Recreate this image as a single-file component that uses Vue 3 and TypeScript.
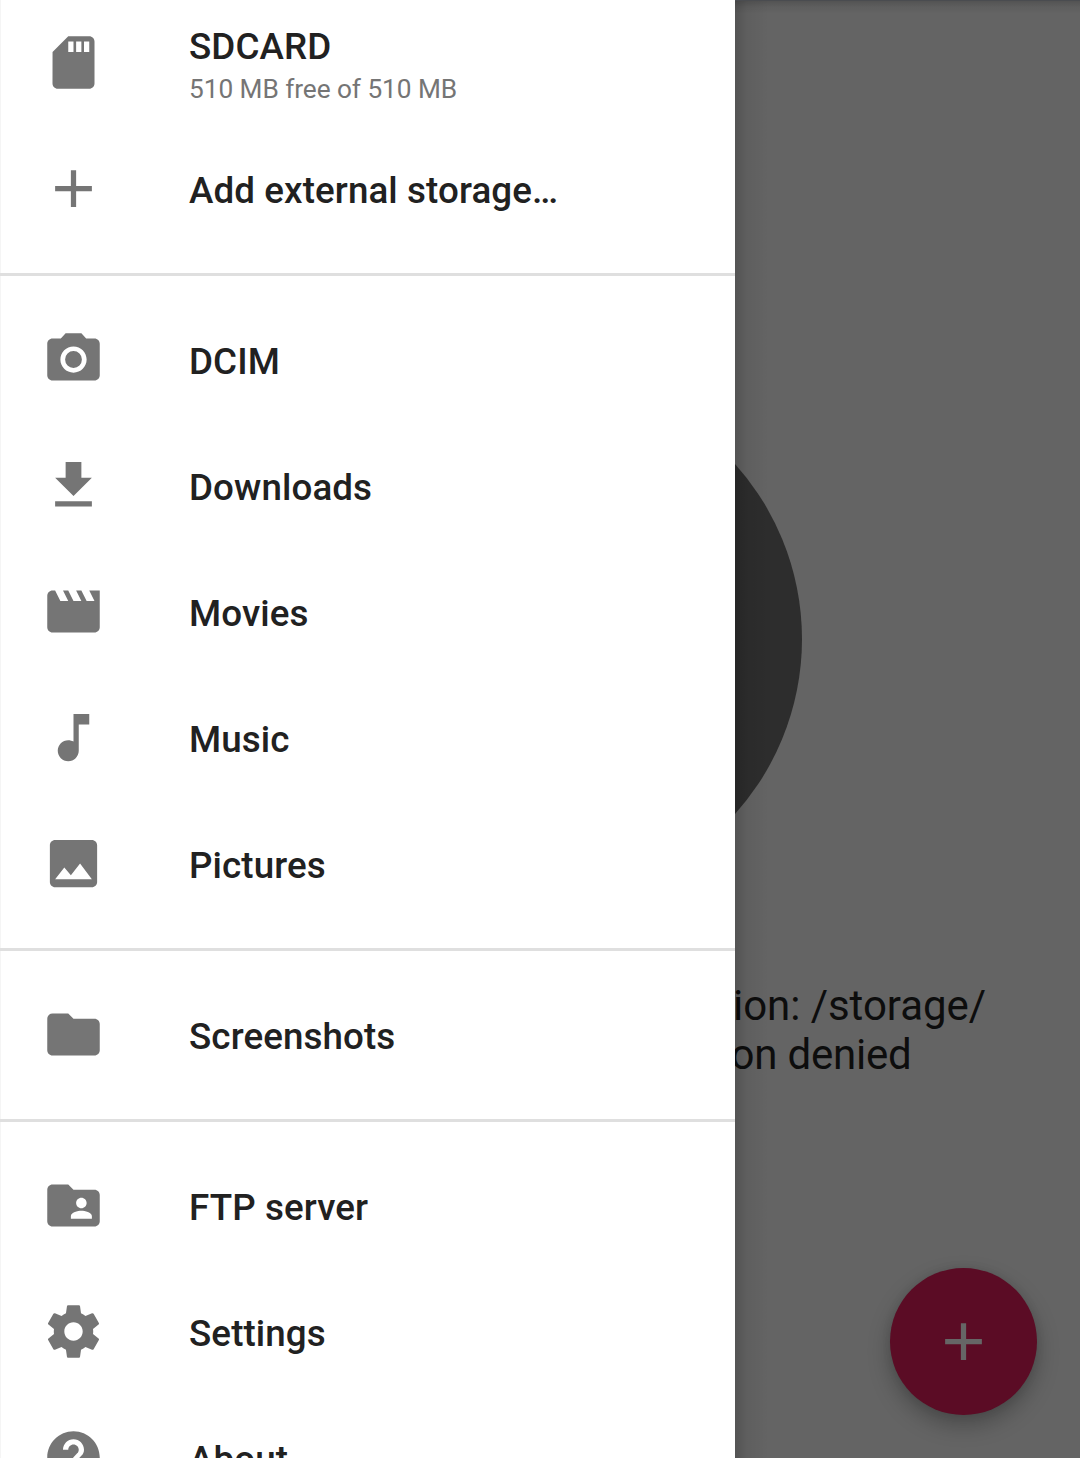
<script setup lang="ts">
interface NavItem {
  label: string
  icon: string
  detail?: string
}

const sections: NavItem[][] = [
  [
    {
      label: 'SDCARD',
      detail: '510 MB free of 510 MB',
      icon: 'M18 2h-8L4.02 8 4 20c0 1.1.9 2 2 2h12c1.1 0 2-.9 2-2V4c0-1.1-.9-2-2-2zm-6 6h-2V4h2v4zm3 0h-2V4h2v4zm3 0h-2V4h2v4z',
    },
    { label: 'Add external storage…', icon: 'M19 13h-6v6h-2v-6H5v-2h6V5h2v6h6v2z' },
  ],
  [
    {
      label: 'DCIM',
      icon: 'M12 8.8a3.2 3.2 0 1 0 0 6.4 3.2 3.2 0 1 0 0-6.4zM9 2L7.17 4H4c-1.1 0-2 .9-2 2v12c0 1.1.9 2 2 2h16c1.1 0 2-.9 2-2V6c0-1.1-.9-2-2-2h-3.17L15 2H9zm3 15c-2.76 0-5-2.24-5-5s2.24-5 5-5 5 2.24 5 5-2.24 5-5 5z',
    },
    { label: 'Downloads', icon: 'M19 9h-4V3H9v6H5l7 7 7-7zM5 18v2h14v-2H5z' },
    {
      label: 'Movies',
      icon: 'M18 4l2 4h-3l-2-4h-2l2 4h-3l-2-4H8l2 4H7L5 4H4c-1.1 0-1.99.9-1.99 2L2 18c0 1.1.9 2 2 2h16c1.1 0 2-.9 2-2V4h-4z',
    },
    {
      label: 'Music',
      icon: 'M12 3v10.55c-.59-.34-1.27-.55-2-.55-2.21 0-4 1.79-4 4s1.79 4 4 4 4-1.79 4-4V7h4V3h-6z',
    },
    {
      label: 'Pictures',
      icon: 'M21 19V5c0-1.1-.9-2-2-2H5c-1.1 0-2 .9-2 2v14c0 1.1.9 2 2 2h14c1.1 0 2-.9 2-2zM8.5 13.5l2.5 3.01L14.5 12l4.5 6H5l3.5-4.5z',
    },
  ],
  [
    {
      label: 'Screenshots',
      icon: 'M10 4H4c-1.1 0-1.99.9-1.99 2L2 18c0 1.1.9 2 2 2h16c1.1 0 2-.9 2-2V8c0-1.1-.9-2-2-2h-8l-2-2z',
    },
  ],
  [
    {
      label: 'FTP server',
      icon: 'M20 6h-8l-2-2H4c-1.1 0-1.99.9-1.99 2L2 18c0 1.1.9 2 2 2h16c1.1 0 2-.9 2-2V8c0-1.1-.9-2-2-2zm-5 3c1.1 0 2 .9 2 2s-.9 2-2 2-2-.9-2-2 .9-2 2-2zm4 8h-8v-1c0-1.33 2.67-2 4-2s4 .67 4 2v1z',
    },
    {
      label: 'Settings',
      icon: 'M19.43 12.98c.04-.32.07-.64.07-.98s-.03-.66-.07-.98l2.11-1.65c.19-.15.24-.42.12-.64l-2-3.46c-.12-.22-.39-.3-.61-.22l-2.49 1c-.52-.4-1.08-.73-1.69-.98l-.38-2.65C14.46 2.18 14.25 2 14 2h-4c-.25 0-.46.18-.49.42l-.38 2.65c-.61.25-1.17.59-1.69.98l-2.49-1c-.23-.09-.49 0-.61.22l-2 3.46c-.13.22-.07.49.12.64l2.11 1.65c-.04.32-.07.65-.07.98s.03.66.07.98l-2.11 1.65c-.19.15-.24.42-.12.64l2 3.46c.12.22.39.3.61.22l2.49-1c.52.4 1.08.73 1.69.98l.38 2.65c.03.24.24.42.49.42h4c.25 0 .46-.18.49-.42l.38-2.65c.61-.25 1.17-.59 1.69-.98l2.49 1c.23.09.49 0 .61-.22l2-3.46c.12-.22.07-.49-.12-.64l-2.11-1.65zM12 15.5c-1.93 0-3.5-1.57-3.5-3.5s1.57-3.5 3.5-3.5 3.5 1.57 3.5 3.5-1.57 3.5-3.5 3.5z',
    },
    {
      label: 'About',
      icon: 'M12 2C6.48 2 2 6.48 2 12s4.48 10 10 10 10-4.48 10-10S17.52 2 12 2zm1 17h-2v-2h2v2zm2.07-7.75l-.9.92C13.45 12.9 13 13.5 13 15h-2v-.5c0-1.1.45-2.1 1.17-2.83l1.24-1.26c.37-.36.59-.86.59-1.41 0-1.1-.9-2-2-2s-2 .9-2 2H8c0-2.21 1.79-4 4-4s4 1.79 4 4c0 .88-.36 1.68-.93 2.25z',
    },
  ],
]
</script>

<template>
  <div class="screen">
    <nav class="drawer">
      <ul v-for="(items, i) in sections" :key="i" class="section">
        <li v-for="item in items" :key="item.label" class="row">
          <svg class="icon" viewBox="0 0 24 24" aria-hidden="true"><path :d="item.icon" /></svg>
          <div class="labels">
            <span class="label">{{ item.label }}</span>
            <span v-if="item.detail" class="detail">{{ item.detail }}</span>
          </div>
        </li>
      </ul>
    </nav>
    <main class="content">
      <div class="half-disc"><div class="disc"></div></div>
      <p class="message">
        <span class="line">ion: /storage/</span>
        <span class="line second">on denied</span>
      </p>
      <button class="fab" aria-label="Add">
        <svg class="fab-icon" viewBox="0 0 24 24"><path d="M19 13h-6v6h-2v-6H5v-2h6V5h2v6h6v2z" /></svg>
      </button>
    </main>
  </div>
</template>

<style>
body {
  margin: 0;
  overflow: hidden;
}
</style>

<style scoped>
.screen {
  display: flex;
  width: 1080px;
  height: 1458px;
  overflow: hidden;
  background: #646464;
  font-family: Roboto, "Liberation Sans", sans-serif;
}

.drawer {
  box-sizing: border-box;
  flex: 0 0 735px;
  height: 1458px;
  overflow: hidden;
  background: #fff;
  box-shadow: inset 1px 0 #f5f5f5;
}

.section {
  margin: 0;
  padding: 21px 0;
  list-style: none;
}

.section:first-child {
  padding-top: 0;
}

.section + .section {
  border-top: 3px solid #dfdfdf;
}

.row {
  display: flex;
  align-items: flex-start;
  height: 126px;
}

.icon {
  flex: none;
  width: 63px;
  height: 63px;
  margin: 31px 84px 0 42px;
  fill: #757575;
}

.labels {
  display: flex;
  flex-direction: column;
  justify-content: center;
  height: 128px;
}

.label {
  font-size: 36.75px;
  font-weight: 500;
  line-height: 43px;
  letter-spacing: 0.1px;
  color: #212121;
  white-space: pre;
}

.detail {
  margin: 6px 0 -1px;
  font-size: 26.25px;
  line-height: 31px;
  letter-spacing: -0.06px;
  color: #757575;
}

.content {
  display: flex;
  flex: 1;
  flex-direction: column;
  position: relative;
  overflow: hidden;
}

.content::before {
  content: "";
  position: absolute;
  inset: 0;
  z-index: 2;
  background:
    linear-gradient(#4a4c50, #4a4c50) 0 0 / 100% 1px no-repeat,
    linear-gradient(rgba(0, 0, 0, 0.19), rgba(0, 0, 0, 0.06) 7px, transparent 14px) 0 0 / 100% 14px no-repeat,
    linear-gradient(90deg, rgba(0, 0, 0, 0.17), rgba(0, 0, 0, 0.06) 12px, transparent 34px) 0 0 / 34px 100% no-repeat;
  pointer-events: none;
}

.half-disc {
  display: flex;
  flex: none;
  justify-content: flex-end;
  width: 67.3px;
  height: 524px;
  margin-top: 377px;
  overflow: hidden;
}

.disc {
  flex: none;
  width: 524px;
  height: 524px;
  border-radius: 50%;
  background: #2d2d2d;
}

.message {
  display: flex;
  flex-direction: column;
  margin: 80px 0 0;
  font-size: 42px;
  line-height: 49px;
  letter-spacing: -0.05px;
  color: #0d0d0d;
  white-space: nowrap;
}

.line {
  margin-left: -2px;
}

.second {
  margin-left: -4.5px;
  letter-spacing: -0.2px;
}

.fab {
  display: flex;
  align-items: center;
  justify-content: center;
  width: 147px;
  height: 147px;
  margin: auto 43px 43px auto;
  padding: 0;
  border: 0;
  border-radius: 50%;
  background: #5b0c25;
  box-shadow: 0 10px 22px rgba(0, 0, 0, 0.27), 0 0 10px rgba(0, 0, 0, 0.08);
}

.fab-icon {
  width: 63px;
  height: 63px;
  fill: #666;
}
</style>
